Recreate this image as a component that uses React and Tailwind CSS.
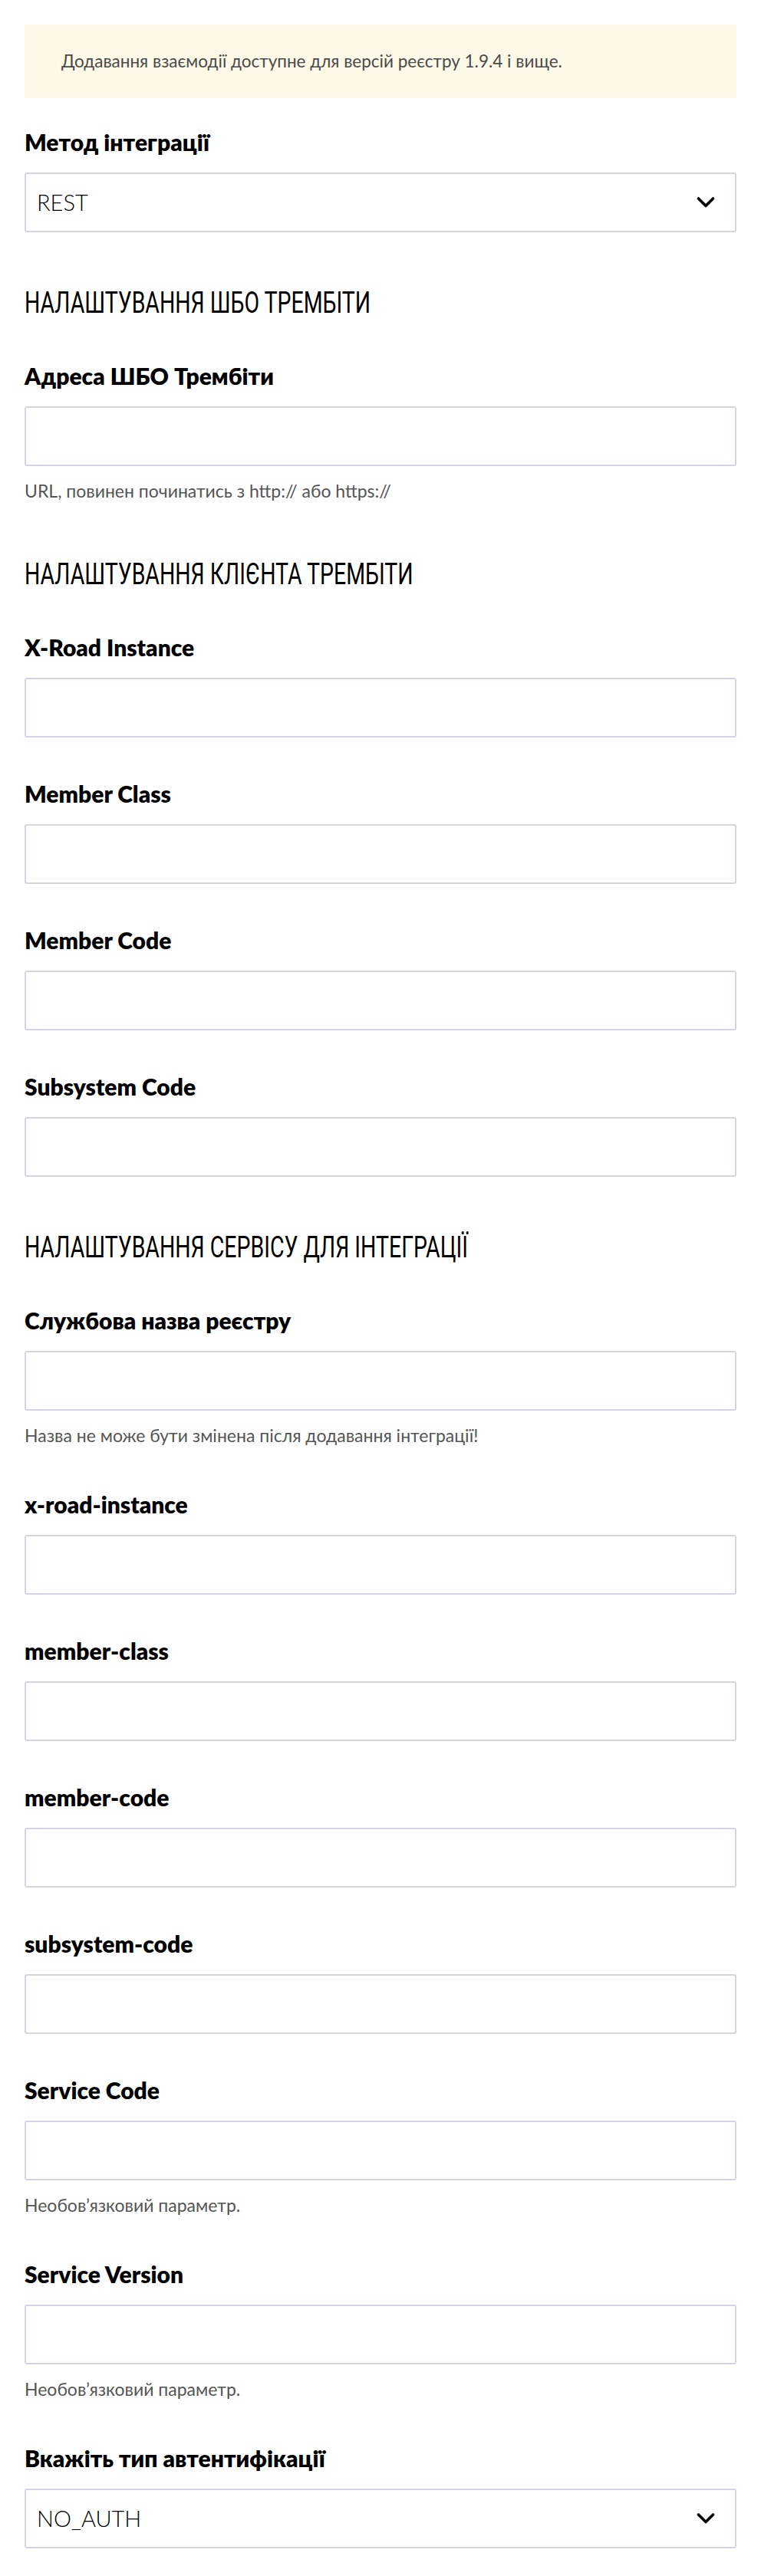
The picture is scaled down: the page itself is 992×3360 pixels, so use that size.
import React from "react";

const bodyFont = "font-['Lato','Roboto',sans-serif]";

const clientFields = ["X-Road Instance", "Member Class", "Member Code", "Subsystem Code"];

const serviceFields = [
  { label: "Службова назва реєстру", hint: "Назва не може бути змінена після додавання інтеграції!" },
  { label: "x-road-instance" },
  { label: "member-class" },
  { label: "member-code" },
  { label: "subsystem-code" },
  { label: "Service Code", hint: "Необов’язковий параметр." },
  { label: "Service Version", hint: "Необов’язковий параметр." },
];

function Chevron() {
  return (
    <svg width="24" height="16" viewBox="0 0 24 16" fill="none" className="shrink-0">
      <path d="M2.5 3 L12 12.5 L21.5 3" stroke="#000" strokeWidth="3.6" strokeLinecap="round" strokeLinejoin="round" />
    </svg>
  );
}

function Label({ children }) {
  return <div className="text-[30px] leading-[40px] font-extrabold text-black">{children}</div>;
}

function Hint({ children }) {
  return <div className="mt-[15px] text-[23px] leading-[34px] text-[#555555]">{children}</div>;
}

function TextField({ label, hint, last }) {
  return (
    <div className={last ? "" : "mb-[53px]"}>
      <Label>{label}</Label>
      <div className="mt-5 h-[78px] w-full rounded-[3px] border-2 border-[#d3d5e0] bg-white" />
      {hint && <Hint>{hint}</Hint>}
    </div>
  );
}

function SelectField({ label, value, last }) {
  return (
    <div className={last ? "" : "mb-[53px]"}>
      <Label>{label}</Label>
      <div className="mt-5 flex h-[78px] w-full items-center justify-between rounded-[3px] border-2 border-[#d3d5e0] bg-white pl-[14px] pr-[26px]">
        <span className="text-[29px] font-light text-black">{value}</span>
        <Chevron />
      </div>
    </div>
  );
}

// condensed heading face is not installed, so squeeze Roboto horizontally
function Heading({ children }) {
  return (
    <h2 className="mt-[15px] mb-[51px] origin-left scale-x-[0.73] whitespace-nowrap font-['Roboto',sans-serif] text-[39px] leading-[48px] font-normal text-black">
      {children}
    </h2>
  );
}

export default function App() {
  return (
    <div className={`min-h-[3360px] bg-white px-8 pt-8 pb-8 ${bodyFont}`}>
      {/* notice */}
      <div className="flex h-24 items-center bg-[#fef8e6] pl-12 text-[22.5px] text-[#4a4a4a]">
        Додавання взаємодії доступне для версій реєстру 1.9.4 і вище.
      </div>

      <div className="mt-[37px] flex flex-col">
        <SelectField label="Метод інтеграції" value="REST" />

        <Heading>НАЛАШТУВАННЯ ШБО ТРЕМБІТИ</Heading>
        <TextField label="Адреса ШБО Трембіти" hint="URL, повинен починатись з http:// або https://" />

        <Heading>НАЛАШТУВАННЯ КЛІЄНТА ТРЕМБІТИ</Heading>
        {clientFields.map((f) => (
          <TextField key={f} label={f} />
        ))}

        <Heading>НАЛАШТУВАННЯ СЕРВІСУ ДЛЯ ІНТЕГРАЦІЇ</Heading>
        {serviceFields.map((f) => (
          <TextField key={f.label} label={f.label} hint={f.hint} />
        ))}

        <SelectField label="Вкажіть тип автентифікації" value="NO_AUTH" last />
      </div>
    </div>
  );
}
